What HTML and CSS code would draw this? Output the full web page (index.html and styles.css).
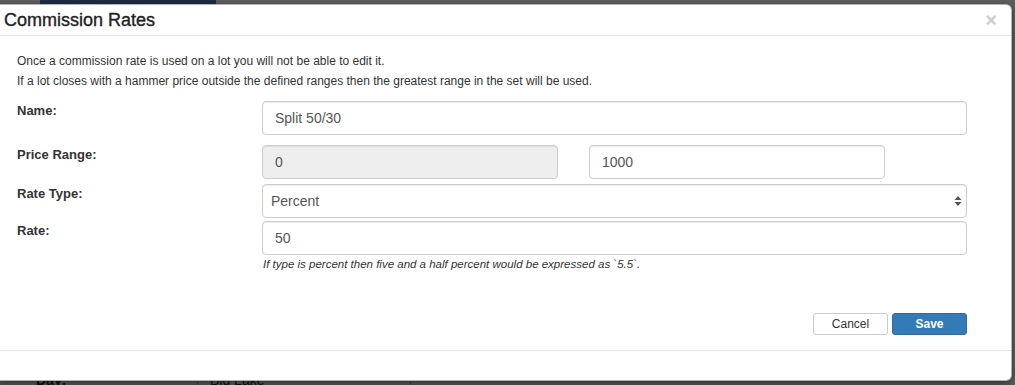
FILE: index.html
```html
<!DOCTYPE html>
<html lang="en">
<head>
    <meta charset="UTF-8">
    <title>Commission Rates</title>
    <link rel="stylesheet" href="styles.css">
</head>
<body>
    <!-- page behind the backdrop -->
    <div class="backdrop">
        <div class="bg-logo"></div>
        <div class="bg-row">
            <span class="bg-label">Day:</span>
            <span class="bg-cell">Big Lake</span>
        </div>
    </div>

    <div class="modal">
        <div class="modal-header">
            <h4 class="modal-title">Commission Rates</h4>
            <button class="close" type="button">&times;</button>
        </div>

        <div class="modal-body">
            <p>Once a commission rate is used on a lot you will not be able to edit it.</p>
            <p>If a lot closes with a hammer price outside the defined ranges then the greatest range in the set will be used.</p>

            <div class="form-row row-name">
                <label for="name">Name:</label>
                <input class="form-control" id="name" type="text" value="Split 50/30">
            </div>

            <div class="form-row row-range">
                <label>Price Range:</label>
                <div class="range">
                    <input class="form-control" type="text" value="0" disabled>
                    <input class="form-control" type="text" value="1000">
                </div>
            </div>

            <div class="form-row">
                <label for="rate-type">Rate Type:</label>
                <div class="select-wrap">
                    <select class="form-control" id="rate-type">
                        <option>Percent</option>
                        <option>Fixed</option>
                    </select>
                    <svg class="caret" width="8" height="12" viewBox="0 0 8 12">
                        <path d="M4 1 L7.5 5 L0.5 5 Z" fill="#555"/>
                        <path d="M4 11 L7.5 7 L0.5 7 Z" fill="#555"/>
                    </svg>
                </div>
            </div>

            <div class="form-row row-rate">
                <label for="rate">Rate:</label>
                <div>
                    <input class="form-control" id="rate" type="text" value="50">
                    <p class="help">If type is percent then five and a half percent would be expressed as `5.5`.</p>
                </div>
            </div>

            <div class="actions">
                <button class="btn btn-default" type="button">Cancel</button>
                <button class="btn btn-primary" type="button">Save</button>
            </div>
        </div>

        <div class="modal-footer"></div>
    </div>
</body>
</html>
```

FILE: styles.css
```css
body {
    margin: 0;
    background-color: #5f5f5f;
    font-family: "Liberation Sans", Arial, sans-serif;
    color: #333;
    overflow: hidden;
    height: 385px;
    position: relative;
}
.backdrop {
    position: absolute;
    top: 0;
    left: 0;
    right: 0;
    bottom: 0;
}
.bg-logo {
    position: absolute;
    top: 0;
    left: 40px;
    width: 176px;
    height: 6px;
    background-color: #1d2b44;
}
.bg-row {
    position: absolute;
    top: 372px;
    left: 0;
    right: 0;
    font-size: 14px;
    line-height: 16px;
    color: #111;
}
.bg-label {
    position: absolute;
    left: 36px;
    font-weight: bold;
}
.bg-cell {
    position: absolute;
    left: 197px;
    padding-left: 12px;
    border-left: 1px solid #444;
    width: 200px;
    border-right: 1px solid #444;
}
.modal {
    position: relative;
    margin: 4px 0 0 -6px;
    width: 1016px;
    background-color: #fff;
    border: 1px solid rgba(0, 0, 0, .3);
    border-radius: 6px;
    box-shadow: 0 3px 9px rgba(0, 0, 0, .5);
}
.modal-header {
    display: flex;
    align-items: center;
    justify-content: space-between;
    height: 30px;
    padding: 0 14px 0 9px;
    border-bottom: 1px solid #e5e5e5;
}
.modal-title {
    margin: 0;
    font-size: 18px;
    font-weight: normal;
    color: #222;
    -webkit-text-stroke: 0.35px #222;
}
.close {
    border: 0;
    background: none;
    padding: 0;
    font-family: "Liberation Sans", Arial, sans-serif;
    font-size: 20px;
    font-weight: bold;
    color: #000;
    opacity: .2;
    line-height: 1;
}
.modal-body {
    padding: 15px 44px 0 22px;
    height: 314px;
    box-sizing: border-box;
}
.modal-body > p {
    margin: 0;
    font-size: 12px;
    line-height: 20px;
}
.form-row {
    display: grid;
    grid-template-columns: 245px 1fr;
    margin-top: 5px;
}
.row-name {
    margin-top: 10px;
}
.row-range {
    margin-top: 10px;
}
.row-rate {
    margin-top: 3px;
}
.form-row label {
    font-size: 13px;
    font-weight: bold;
    line-height: 20px;
}
.form-control {
    display: block;
    width: 100%;
    height: 34px;
    box-sizing: border-box;
    padding: 6px 12px;
    font-family: "Liberation Sans", Arial, sans-serif;
    font-size: 14px;
    color: #555;
    background-color: #fff;
    border: 1px solid #ccc;
    border-radius: 4px;
    box-shadow: inset 0 1px 1px rgba(0, 0, 0, .075);
}
.form-control:disabled {
    background-color: #eee;
}
.range {
    display: grid;
    grid-template-columns: 296px 296px;
    column-gap: 31px;
}
.select-wrap {
    position: relative;
    height: 34px;
}
select.form-control {
    -webkit-appearance: none;
    appearance: none;
    padding-left: 8px;
}
.caret {
    position: absolute;
    right: 5px;
    top: 11px;
}
.help {
    margin: 2px 0 0 1px;
    font-size: 11.5px;
    font-style: italic;
    color: #333;
    line-height: 14px;
}
.actions {
    display: flex;
    justify-content: flex-end;
    gap: 4px;
    margin-top: 42px;
}
.btn {
    width: 75px;
    height: 22px;
    font-family: "Liberation Sans", Arial, sans-serif;
    font-size: 12px;
    border-radius: 3px;
    padding: 0;
}
.btn-default {
    background-color: #fff;
    border: 1px solid #ccc;
    color: #333;
}
.btn-primary {
    background-color: #337ab7;
    border: 1px solid #2e6da4;
    color: #fff;
    font-weight: bold;
}
.modal-footer {
    height: 29px;
    border-top: 1px solid #e5e5e5;
}
```
